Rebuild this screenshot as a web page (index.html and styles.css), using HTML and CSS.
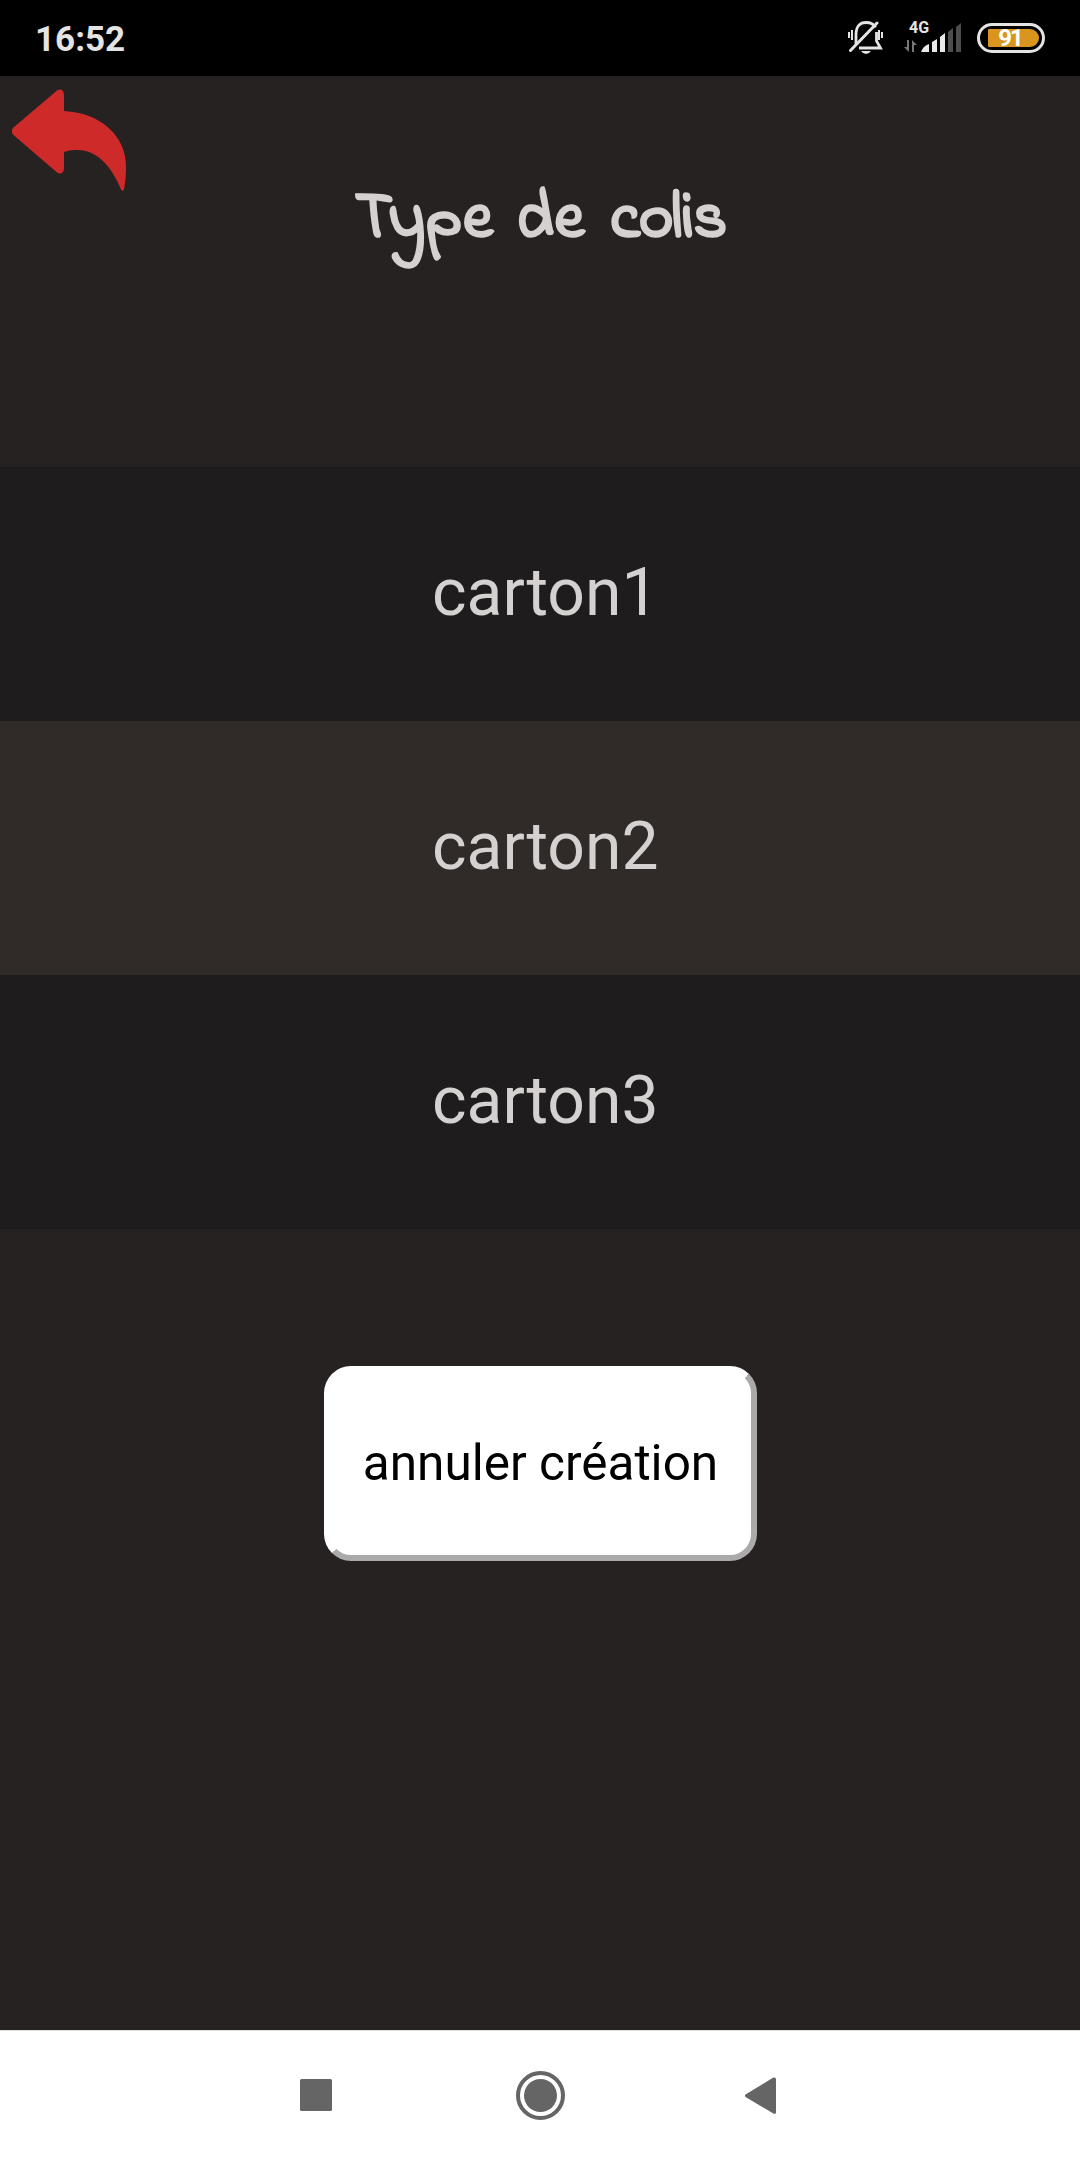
FILE: index.html
```html
<!DOCTYPE html>
<html lang="fr">
<head>
<meta charset="utf-8">
<title>Type de colis</title>
<link rel="stylesheet" href="styles.css">
</head>
<body>
<div class="screen">
  <header class="status">
    <span class="clock">16:52</span>
    <div class="indicators">
      <svg class="bell" width="36" height="34" viewBox="0 0 36 34" fill="none" stroke="#e4e4e4" stroke-width="2.8">
        <path d="M8 24V14C8 5 12 1.500 18 1.500c5 0 8 2 9.500 5M28.500 11v9l4 7H11" />
        <path d="M2.500 29.500 29 2" stroke-width="3" stroke-linecap="round"/>
        <path d="M1 11v6M4 9v10M34 11v6M31 9v10" stroke-width="2"/>
        <path d="M13 30h10q-2 3-5 3t-5-3z" fill="#e4e4e4" stroke="none"/>
      </svg>
      <div class="signal">
        <span class="network">4G</span>
        <svg width="58" height="30" viewBox="0 0 58 30">
          <path d="M0 25h3V18h2v12zM8 30V18l5 5h-3v7z" fill="#777"/>
          <path d="M17 30q2-6 8-8v8zM28 30V20l5-3v13zM36 30V15l5-4v19z" fill="#e9e9e9"/>
          <path d="M44 30V10l5-4v24zM52 30V5l5-4v29z" fill="#4d4d4d"/>
        </svg>
      </div>
      <div class="battery"><span class="charge">91</span></div>
    </div>
  </header>
  <main class="content">
    <svg class="back" width="116" height="104" viewBox="0 0 116 104" fill="#cd2a29">
      <path d="M1.500 38.500 45 1.500Q48-.500 50.500 1.500 52 3 52 6V22C90 24 114 48 114 77q0 14-2 23.500-1.500 2.500-3 0C100 78 85 61 66 61q-8-.500-14 2V79q0 3-1.500 4.500-2.500 2-5.500 0L1.500 46Q-2 42 1.500 38.500z"/>
    </svg>
    <h1 class="title"><span class="wide">Type</span> <span class="wide">de</span> <span class="last">colis</span></h1>
    <ul class="parcels">
      <li class="parcel">carton1</li>
      <li class="parcel">carton2</li>
      <li class="parcel">carton3</li>
    </ul>
    <button class="cancel" type="button">annuler création</button>
  </main>
  <nav class="navbar">
    <svg width="480" height="50" viewBox="0 0 480 50" fill="#656565">
      <rect x="0" y="8" width="32" height="32" rx="1.500"/>
      <circle cx="240.500" cy="24.500" r="16.500"/>
      <circle cx="240.500" cy="24.500" r="22.500" fill="none" stroke="#656565" stroke-width="4"/>
      <path d="M445.500 23.500 473 6.800Q476 5.500 476 8.500V41Q476 44 473 42.300L445.500 26Q444.500 24.700 445.500 23.500z"/>
    </svg>
  </nav>
</div>
</body>
</html>
```

FILE: styles.css
```css
body {
  margin: 0;
  background: #262221;
  font-family: Roboto, "Liberation Sans", sans-serif;
}
.screen {
  display: flex;
  flex-direction: column;
  width: 1080px;
  height: 2160px;
}
.status {
  display: flex;
  justify-content: space-between;
  box-sizing: border-box;
  height: 76px;
  padding: 0 35px;
  background: #000;
}
.clock {
  line-height: 79px;
  font-size: 35px;
  font-weight: 700;
  color: #e4e4e4;
}
.indicators {
  display: flex;
  align-items: flex-start;
}
.bell {
  margin: 21px 20px 0 0;
}
.signal {
  display: flex;
  flex-direction: column;
  position: relative;
  padding-top: 22px;
  margin-right: 15px;
}
.network {
  position: absolute;
  left: 5px;
  top: 18px;
  font-size: 16px;
  line-height: 19px;
  font-weight: 700;
  color: #e4e4e4;
}
.battery {
  display: flex;
  box-sizing: border-box;
  width: 68px;
  height: 30px;
  margin-top: 23px;
  padding: 3px 3px 3px 8px;
  border: 3px solid #e4e4e4;
  border-radius: 15px;
}
.charge {
  flex: 1;
  border-radius: 1px 9px 9px 1px;
  background: #da951f;
  color: #fff;
  font-size: 24px;
  font-weight: 700;
  letter-spacing: -2px;
  line-height: 19px;
  padding-right: 7px;
  text-align: center;
}
.content {
  display: flex;
  flex-direction: column;
  align-items: center;
  flex: 1;
}
.back {
  align-self: flex-start;
  margin: 13px 0 0 12px;
}
.title {
  display: flex;
  gap: 23px;
  height: 80px;
  margin: -10px 0 0 2px;
  font-family: "Indie Flower", "Comic Sans MS", Lato, sans-serif;
  font-size: 65px;
  font-weight: 700;
  line-height: 76px;
  color: #d5d1d0;
  -webkit-text-stroke: 1.5px #d5d1d0;
}
.wide {
  letter-spacing: 1.5px;
}
.last {
  margin-left: 2px;
}
.parcels {
  align-self: stretch;
  margin: 204px 0 0;
  padding: 0;
  list-style: none;
}
.parcel {
  height: 254px;
  padding-left: 432px;
  background: #1e1c1d;
  font-size: 66px;
  line-height: 252px;
  color: #d5d1d0;
}
.parcel:nth-child(even) {
  background: #302b28;
}
.cancel {
  box-sizing: border-box;
  width: 433px;
  height: 195px;
  margin: 137px 0 0 1px;
  padding: 0 0 2px;
  border: 6px solid;
  border-color: #fff #aaa #aaa #fff;
  border-radius: 27px;
  background: #fff;
  font: 49.5px Roboto, "Liberation Sans", sans-serif;
  color: #000;
}
.navbar {
  box-sizing: border-box;
  height: 130px;
  padding: 40px 0 0 300px;
  border-top: 1px solid #e0e0e0;
  background: #fff;
}
```
